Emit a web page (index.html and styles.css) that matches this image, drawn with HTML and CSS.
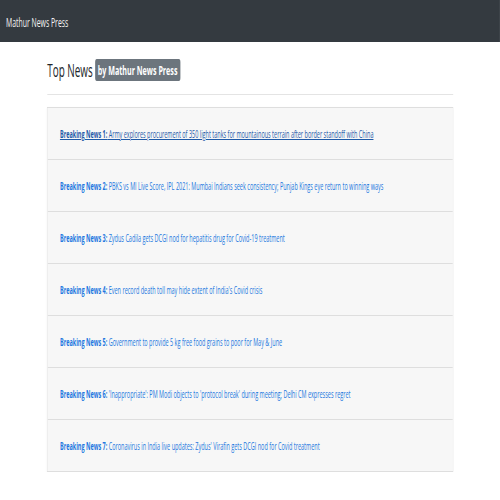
FILE: index.html
```html
<!DOCTYPE html>
<html>
<head>
<meta charset="utf-8">
<title>Mathur News Press</title>
<link rel="stylesheet" href="styles.css">
</head>
<body>
<div class="viewport">
<div class="page">
  <nav class="navbar"><span class="brand">Mathur News Press</span></nav>
  <main class="container">
    <h1 class="title">Top News <span class="badge">by Mathur News Press</span></h1>
    <hr class="rule">
    <ul class="news">
      <li class="item"><a class="link hover" href="#"><b>Breaking News 1:</b> Army explores procurement of 350 light tanks for mountainous terrain after border standoff with China</a></li>
      <li class="item"><a class="link" href="#"><b>Breaking News 2:</b> PBKS vs MI Live Score, IPL 2021: Mumbai Indians seek consistency; Punjab Kings eye return to winning ways</a></li>
      <li class="item"><a class="link" href="#"><b>Breaking News 3:</b> Zydus Cadila gets DCGI nod for hepatitis drug for Covid-19 treatment</a></li>
      <li class="item"><a class="link" href="#"><b>Breaking News 4:</b> Even record death toll may hide extent of India's Covid crisis</a></li>
      <li class="item"><a class="link" href="#"><b>Breaking News 5:</b> Government to provide 5 kg free food grains to poor for May &amp; June</a></li>
      <li class="item"><a class="link" href="#"><b>Breaking News 6:</b> 'Inappropriate': PM Modi objects to 'protocol break' during meeting; Delhi CM expresses regret</a></li>
      <li class="item"><a class="link" href="#"><b>Breaking News 7:</b> Coronavirus in India live updates: Zydus' Virafin gets DCGI nod for Covid treatment</a></li>
    </ul>
  </main>
</div>
</div>
</body>
</html>
```

FILE: styles.css
```css
html, body {
  margin: 0;
  padding: 0;
  overflow: hidden;
  background: #fff;
}
.viewport {
  width: 100%;
  overflow: hidden;
}
.page {
  width: 909px;
  transform: scaleX(0.55);
  transform-origin: 0 0;
  font-family: "Open Sans", "Liberation Sans", sans-serif;
  color: #212529;
}
.navbar {
  height: 42px;
  background: #343a40;
  display: flex;
  align-items: center;
  padding: 0 11px;
  box-sizing: border-box;
}
.brand {
  color: #f4f4f4;
  font-size: 12.5px;
  line-height: 20px;
  padding-top: 3px;
}
.container {
  margin: 0 85px 0 86px;
  padding-top: 16px;
}
.title {
  margin: 0;
  display: flex;
  align-items: center;
  gap: 4px;
  height: 24px;
  font-size: 18px;
  font-weight: 400;
  line-height: 24px;
}
.badge {
  background: #6c757d;
  color: #fff;
  font-size: 13px;
  font-weight: 700;
  line-height: 22px;
  height: 22px;
  padding: 0 5px;
  border-radius: 3px;
}
.rule {
  margin: 12px 0 12px;
  border: 0;
  border-top: 1px solid #e4e4e4;
}
.news {
  list-style: none;
  margin: 0;
  padding: 0;
  border: 1px solid #dedede;
  box-shadow: 0 1px 3px rgba(0,0,0,0.08);
}
.item {
  background: #f7f7f7;
  height: 51px;
  padding: 0 22px;
  display: flex;
  align-items: center;
  font-size: 10px;
  border-top: 1px solid #dedede;
}
.item:first-child {
  border-top: 0;
}
.link {
  color: #2277e0;
  text-decoration: none;
}
.link.hover {
  color: #1f5aa8;
  text-decoration: underline;
}
```
